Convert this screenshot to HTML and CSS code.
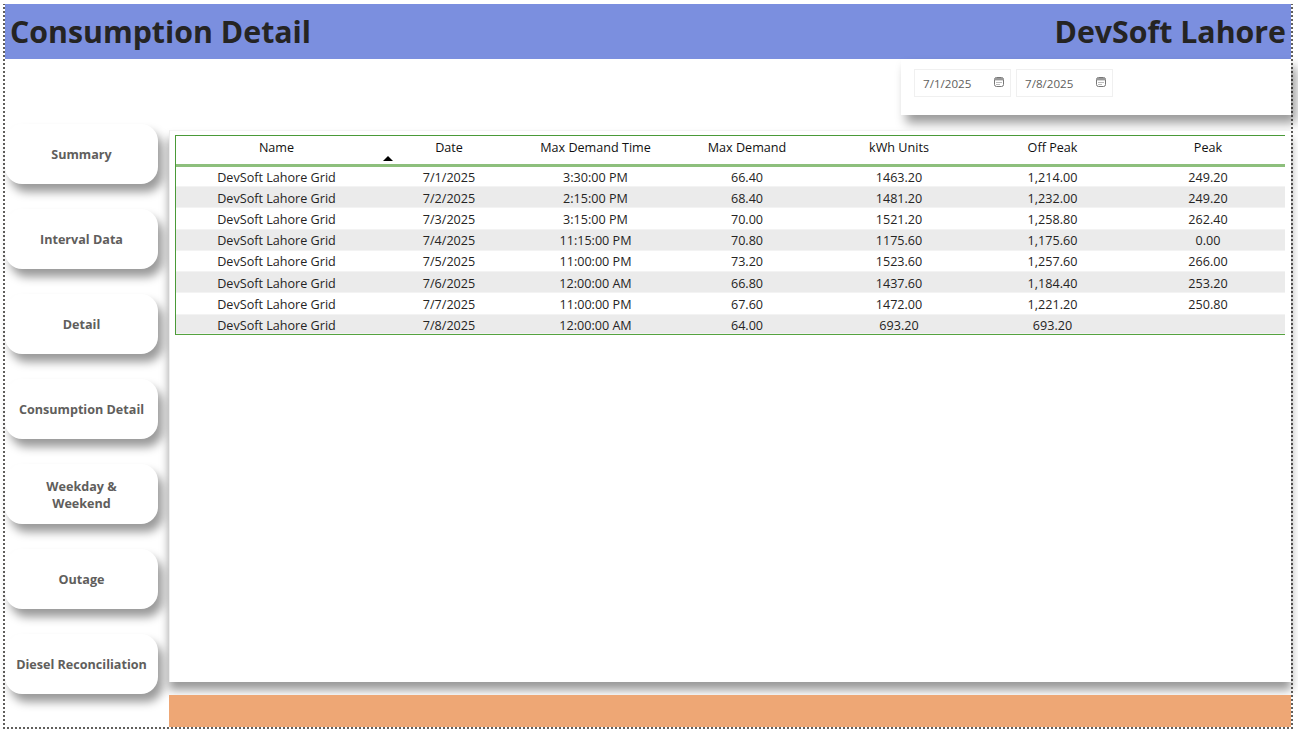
FILE: index.html
```html
<!DOCTYPE html>
<html lang="en">
<head>
  <meta charset="UTF-8">
  <meta name="viewport" content="width=device-width, initial-scale=1.0">
  <title>Consumption Detail</title>
  <link rel="stylesheet" href="styles.css">
</head>
<body>

  <div class="frame">
    <header class="title-bar">
      <h1>Consumption Detail</h1>
      <h1>DevSoft Lahore</h1>
    </header>

    <div class="body-grid">
      <nav class="side-nav">
        <a class="nav-btn">Summary</a>
        <a class="nav-btn">Interval Data</a>
        <a class="nav-btn">Detail</a>
        <a class="nav-btn">Consumption Detail</a>
        <a class="nav-btn two-line">Weekday &amp;<br>Weekend</a>
        <a class="nav-btn">Outage</a>
        <a class="nav-btn">Diesel Reconciliation</a>
      </nav>

      <div class="content">
        <div class="slicer-row">
          <div class="slicer">
            <div class="date-box">
              <span>7/1/2025</span>
              <svg class="cal" viewBox="0 0 10 10"><rect x="0.5" y="0.5" width="9" height="9" rx="2" fill="none" stroke="#777"/><rect x="1" y="1" width="8" height="2.4" fill="#999"/><path d="M2.5 5.5h1M4.5 5.5h1M6.5 5.5h1M2.5 7.5h1M4.5 7.5h1" stroke="#777"/></svg>
            </div>
            <div class="date-box">
              <span>7/8/2025</span>
              <svg class="cal" viewBox="0 0 10 10"><rect x="0.5" y="0.5" width="9" height="9" rx="2" fill="none" stroke="#777"/><rect x="1" y="1" width="8" height="2.4" fill="#999"/><path d="M2.5 5.5h1M4.5 5.5h1M6.5 5.5h1M2.5 7.5h1M4.5 7.5h1" stroke="#777"/></svg>
            </div>
          </div>
        </div>

        <div class="table-card">
          <div class="table-wrap">
            <table class="data-table">
              <colgroup>
                <col class="c-name"><col class="c-date"><col class="c-time"><col class="c-demand"><col class="c-units"><col class="c-off"><col class="c-peak">
              </colgroup>
              <thead>
                <tr>
                  <th>Name</th>
                  <th class="sorted">Date<span class="sort-arrow"></span></th>
                  <th>Max Demand Time</th>
                  <th>Max Demand</th>
                  <th>kWh Units</th>
                  <th>Off Peak</th>
                  <th>Peak</th>
                </tr>
              </thead>
              <tbody>
                <tr><td>DevSoft Lahore Grid</td><td>7/1/2025</td><td>3:30:00 PM</td><td>66.40</td><td>1463.20</td><td>1,214.00</td><td>249.20</td></tr>
                <tr><td>DevSoft Lahore Grid</td><td>7/2/2025</td><td>2:15:00 PM</td><td>68.40</td><td>1481.20</td><td>1,232.00</td><td>249.20</td></tr>
                <tr><td>DevSoft Lahore Grid</td><td>7/3/2025</td><td>3:15:00 PM</td><td>70.00</td><td>1521.20</td><td>1,258.80</td><td>262.40</td></tr>
                <tr><td>DevSoft Lahore Grid</td><td>7/4/2025</td><td>11:15:00 PM</td><td>70.80</td><td>1175.60</td><td>1,175.60</td><td>0.00</td></tr>
                <tr><td>DevSoft Lahore Grid</td><td>7/5/2025</td><td>11:00:00 PM</td><td>73.20</td><td>1523.60</td><td>1,257.60</td><td>266.00</td></tr>
                <tr><td>DevSoft Lahore Grid</td><td>7/6/2025</td><td>12:00:00 AM</td><td>66.80</td><td>1437.60</td><td>1,184.40</td><td>253.20</td></tr>
                <tr><td>DevSoft Lahore Grid</td><td>7/7/2025</td><td>11:00:00 PM</td><td>67.60</td><td>1472.00</td><td>1,221.20</td><td>250.80</td></tr>
                <tr><td>DevSoft Lahore Grid</td><td>7/8/2025</td><td>12:00:00 AM</td><td>64.00</td><td>693.20</td><td>693.20</td><td></td></tr>
              </tbody>
            </table>
          </div>
        </div>

        <div class="footer-bar"></div>
      </div>
    </div>
  </div>

</body>
</html>
```

FILE: styles.css
```css
* {
  margin: 0;
  padding: 0;
  box-sizing: border-box;
}

html, body {
  height: 100%;
  overflow: hidden;
  background: #fff;
}

body {
  font-family: 'Open Sans', 'Noto Sans', sans-serif;
  color: #252423;
  padding: 4px 5px 1px 3px;
}

/* square dots on three sides, a dotted border comes out round and too faint */
.frame {
  height: 725px;
  display: flex;
  flex-direction: column;
  padding: 0 2px 2px;
  background:
    repeating-linear-gradient(90deg, #605e5c 0 2px, transparent 2px 4px) bottom / 100% 2px no-repeat,
    repeating-linear-gradient(0deg, #605e5c 0 2px, transparent 2px 4px) left / 2px 100% no-repeat,
    repeating-linear-gradient(0deg, #605e5c 0 2px, transparent 2px 4px) right / 2px 100% no-repeat;
}

.title-bar {
  height: 55px;
  flex: none;
  background: #7b8fdf;
  display: flex;
  align-items: center;
  justify-content: space-between;
  padding: 0 5px;
}

.title-bar h1 {
  font-size: 30.3px;
  font-weight: 700;
  color: #252423;
}

.body-grid {
  flex: 1;
  display: flex;
  min-height: 0;
}

/* left buttons */
.side-nav {
  width: 164px;
  flex: none;
  padding: 65px 0 0 0;
  display: flex;
  flex-direction: column;
  gap: 25px;
}

.nav-btn {
  width: 153px;
  height: 60px;
  display: flex;
  align-items: center;
  justify-content: center;
  text-align: center;
  font-size: 12.6px;
  font-weight: 700;
  line-height: 17px;
  color: #605e5c;
  background: #fff;
  border-radius: 17px;
  box-shadow: 5px 8px 10px rgba(0, 0, 0, 0.4);
}

.two-line {
  padding-top: 2px;
}

.content {
  flex: 1;
  min-width: 0;
  display: flex;
  flex-direction: column;
}

.slicer-row {
  flex: none;
  height: 71px;
  display: flex;
  justify-content: flex-end;
  align-items: flex-start;
}

.slicer {
  width: 390px;
  height: 56px;
  padding: 10px 13px;
  display: flex;
  gap: 5px;
  background: #fff;
  box-shadow: 5px 8px 10px rgba(0, 0, 0, 0.4);
}

.date-box {
  width: 97px;
  height: 28px;
  padding: 0 6px 0 8px;
  display: flex;
  align-items: center;
  justify-content: space-between;
  border: 1px solid #f0f0f0;
  font-size: 11.6px;
  color: #605e5c;
}

.cal {
  width: 10px;
  height: 10px;
  margin-bottom: 3px;
}

.table-card {
  flex: none;
  height: 552px;
  padding: 4px 6px 0 5px;
  background: #fff;
  border-left: 1px solid #eee;
  border-top: 1px solid #f5f5f5;
  box-shadow: 0 8px 9px rgba(0, 0, 0, 0.4);
}

.table-wrap {
  width: 1110px;
  border-left: 1px solid #4a9a38;
  border-top: 1px solid #4a9a38;
  border-bottom: 1px solid #55a33f;
}

.data-table {
  width: 100%;
  table-layout: fixed;
  border-collapse: separate;
  border-spacing: 0;
  font-size: 12.6px;
  line-height: 15px;
  color: #252423;
}

.c-name { width: 201px; }
.c-date { width: 144px; }
.c-time { width: 149px; }
.c-demand { width: 154px; }
.c-units { width: 150px; }
.c-off { width: 157px; }
.c-peak { width: 154px; }

.data-table th {
  height: 31px;
  padding-bottom: 6px;
  font-weight: 400;
  color: #111;
  text-align: center;
  border-bottom: 3px solid #8dbf7c;
}

.data-table td {
  height: 21.25px;
  padding-top: 2px;
  text-align: center;
  white-space: nowrap;
  border-bottom: 1px solid #f3f3f3;
}

/* first and last rows are shorter in the visual */
.data-table tbody tr:first-child td {
  height: 20px;
  padding-top: 1px;
}

.data-table tbody tr:last-child td {
  height: 19px;
  padding-top: 3px;
}

.data-table tbody tr:nth-child(even) {
  background: #ebebeb;
}

.sorted {
  position: relative;
}

.sort-arrow {
  position: absolute;
  left: 6px;
  bottom: 3px;
  border-left: 5px solid transparent;
  border-right: 5px solid transparent;
  border-bottom: 5px solid #000;
}

.footer-bar {
  flex: 1;
  margin-top: 13px;
  background: #eea775;
}
```
